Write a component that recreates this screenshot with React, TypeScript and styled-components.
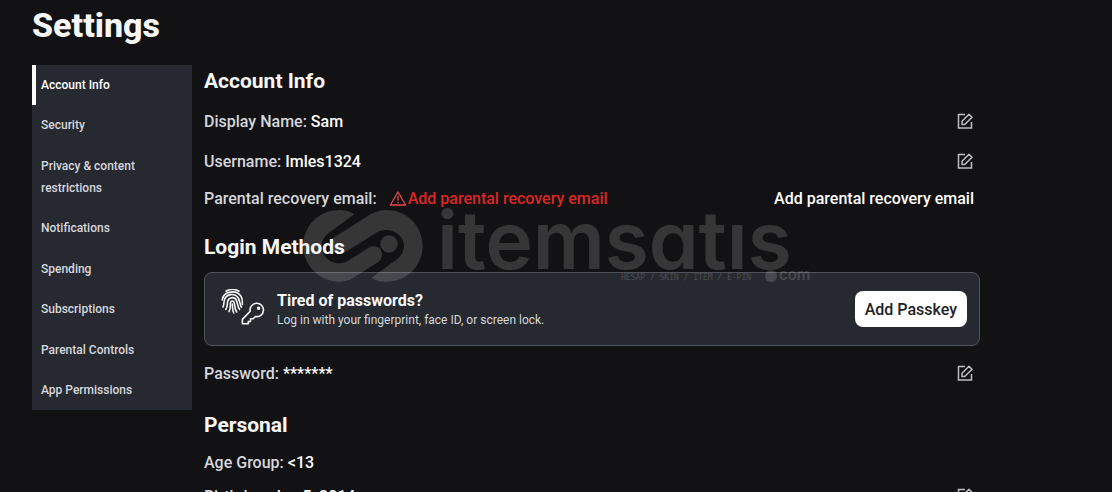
import React from 'react';
import styled, { createGlobalStyle } from 'styled-components';

const GlobalStyle = createGlobalStyle`
  * { box-sizing: border-box; }
  body {
    margin: 0;
    background: #121214;
    color: #f7f7f8;
    font-family: Roboto, 'Liberation Sans', sans-serif;
    font-size: 16px;
    font-weight: 500;
  }
`;

const Page = styled.div`
  position: relative;
  height: 100vh;
  overflow: hidden;
  padding: 0 32px;
`;

const Title = styled.h1`
  margin: 0;
  padding: 5px 0 20px;
  font-size: 34px;
  line-height: 40px;
  font-weight: 800;
`;

const Layout = styled.div`
  display: flex;
  align-items: flex-start;
  gap: 12px;
  max-width: 948px;
`;

const Sidebar = styled.nav`
  flex: 0 0 160px;
  background: #272930;
`;

const TabList = styled.ul`
  display: flex;
  flex-direction: column;
  justify-content: space-between;
  min-height: 345px;
  list-style: none;
  margin: 0;
  padding: 0;
`;

const TabLink = styled.a<{ $active?: boolean }>`
  display: block;
  padding: 9px 36px 9px 5px;
  border-left: 4px solid ${(p) => (p.$active ? '#ffffff' : 'transparent')};
  color: ${(p) => (p.$active ? '#ffffff' : '#d5d7dd')};
  font-size: 12px;
  line-height: 22px;
  text-decoration: none;
`;

const Main = styled.main`
  flex: 1;
  min-width: 0;
`;

const Heading = styled.h2`
  margin: 0;
  padding-bottom: 4px;
  font-size: 21px;
  line-height: 32px;
  font-weight: 700;
`;

const Section = styled.section`
  padding-bottom: 16px;
`;

const Row = styled.div<{ $compact?: boolean }>`
  display: flex;
  align-items: center;
  justify-content: space-between;
  height: ${(p) => (p.$compact ? 34 : 40)}px;
  padding-right: 6px;
`;

const Label = styled.span`
  color: #d5d7dd;
`;

const Value = styled.span`
  color: #ffffff;
`;

const Field = styled.div`
  display: flex;
  align-items: center;
  gap: 4px;
`;

const Warning = styled.span`
  display: flex;
  align-items: center;
  gap: 1px;
  margin-left: 8px;
  color: #dc2626;
`;

const PlainButton = styled.button`
  display: flex;
  padding: 0;
  border: 0;
  background: none;
  color: #ffffff;
  font: inherit;
  cursor: pointer;
`;

const Card = styled.div`
  display: flex;
  align-items: center;
  height: 74px;
  margin: 5px 0 7px;
  padding: 0 12px 0 16px;
  border: 1px solid #505259;
  border-radius: 8px;
  background: #272930;
`;

const CardText = styled.div`
  flex: 1;
  padding: 2px 0 0 12px;
`;

const CardTitle = styled.div`
  line-height: 20px;
  font-weight: 700;
`;

const CardNote = styled.div`
  color: #d5d7dd;
  font-size: 12px;
  line-height: 18px;
  font-weight: 400;
`;

const PasskeyButton = styled.button`
  height: 36px;
  padding: 0 10px;
  border: 0;
  border-radius: 8px;
  background: #ffffff;
  color: #202227;
  font: inherit;
  cursor: pointer;
`;

const Watermark = styled.div`
  position: absolute;
  left: 303px;
  top: 205px;
  width: 512px;
  height: 84px;
  opacity: 0.15;
  pointer-events: none;
`;

const Wordmark = styled.text`
  font-family: Inter, sans-serif;
  font-weight: 600;
  font-feature-settings: 'cv11';
`;

const Tagline = styled.text`
  font-family: 'DejaVu Sans Mono', monospace;
  font-size: 8px;
`;

const EditIcon = () => (
  <svg width="18" height="18" viewBox="0 0 18 18" fill="none" stroke="#bcbec2" strokeWidth="1.5">
    <path d="M9 2.500H2.500v13.500h13V10" />
    <path d="M6 12.500V9.300L13 2.200l3 3-7.300 7.300z" strokeLinejoin="round" />
  </svg>
);

const WarningIcon = () => (
  <svg width="18" height="18" viewBox="0 0 18 18" fill="none" stroke="#e5484d" strokeWidth="1.3">
    <path d="M9 3 L16.6 16 H1.4 Z" strokeLinejoin="round" />
    <path d="M9 7v4.600M9 12.800v1.500" />
  </svg>
);

const PasskeyIcon = () => (
  <svg width="44" height="40" viewBox="0 1 44 40" fill="none" stroke="#f7f7f8" strokeWidth="1.600" strokeLinecap="round">
    <path d="M5 3.200C9 .8 14 .8 18 3.200" />
    <path d="M1.200 12C2.400 2.800 15.500 1.400 20 8.200c1.400 2.300 1.600 5 1.400 8.200" />
    <path d="M2 19c1-2.200.8-4 1.200-6.200C4.500 5.600 13.800 4.400 17.200 10c1.800 3.200 1.500 6 3.200 9.200" />
    <path d="M4.800 21.500c2-3 1.300-5.200 1.800-8 1-4.600 7-5.200 8.800-1.200 1.600 3.500.8 6.200 3.200 9.200" />
    <path d="M8 23.600c2-3.200 1-6 1.500-9 .5-2 3-2 3.600-.2 1.100 3.400.2 6.400 2.600 9.600" />
    <path d="M11.300 16c.4 3-.2 5.500 1.400 9" />
    <g strokeLinejoin="round" transform="translate(0 -1)">
      <path d="M29.200 24.300a6.700 6.700 0 1 1 5.200 5.200l-2.200 2.200h-2.700v2.800h-2.200v2.200H21.400v-4.300z" />
      <circle cx="37.600" cy="21.200" r="1" />
    </g>
  </svg>
);

const WatermarkLogo = () => (
  <svg width="512" height="84" viewBox="0 0 512 84" fill="#ffffff">
    <g transform="translate(-3 0) scale(0.3333)">
      <path d="M163 28C145 17 130 15 118 15C58 15 10 62 10 122C10 182 58 230 118 230C140 230 152 224 162 217L236 170C254 155 248 125 222 124C212 124 207 128 200 132L140 170C110 185 65 165 65 125C65 108 72 96 85 85Z" />
      <path d="M215 218C233 229 248 230 260 230C320 230 368 183 368 123C368 63 320 15 260 15C240 15 226 20 212 28L98 100C80 112 88 140 112 146C125 148 135 142 145 136L228 84C258 62 312 82 312 122C312 140 304 152 293 161Z" />
      <circle cx="267" cy="117" r="26" />
    </g>
    <Wordmark x="134" y="64" fontSize="80">itemsatıs</Wordmark>
    <Tagline x="318" y="75">HESAP / SKIN / ITEM / E-PIN</Tagline>
    <circle cx="468" cy="71" r="6" />
    <Wordmark x="476" y="75" fontSize="15">com</Wordmark>
  </svg>
);

const tabs = [
  'Account Info',
  'Security',
  'Privacy & content restrictions',
  'Notifications',
  'Spending',
  'Subscriptions',
  'Parental Controls',
  'App Permissions',
];

type InfoRowProps = { label: string; value: string; editable?: boolean; compact?: boolean };

const InfoRow = ({ label, value, editable, compact }: InfoRowProps) => (
  <Row $compact={compact}>
    <Field>
      <Label>{label}</Label>
      <Value>{value}</Value>
    </Field>
    {editable && (
      <PlainButton aria-label={`Edit ${label}`}>
        <EditIcon />
      </PlainButton>
    )}
  </Row>
);

export default function App() {
  return (
    <>
      <GlobalStyle />
      <Page>
        <Title>Settings</Title>
        <Layout>
          <Sidebar aria-label="Settings">
            <TabList>
              {tabs.map((tab, i) => (
                <li key={tab}>
                  <TabLink href="#" $active={i === 0}>{tab}</TabLink>
                </li>
              ))}
            </TabList>
          </Sidebar>
          <Main>
            <Section>
              <Heading>Account Info</Heading>
              <InfoRow label="Display Name:" value="Sam" editable />
              <InfoRow label="Username:" value="Imles1324" editable />
              <Row $compact>
                <Field>
                  <Label>Parental recovery email:</Label>
                  <Warning>
                    <WarningIcon />
                    Add parental recovery email
                  </Warning>
                </Field>
                <PlainButton>Add parental recovery email</PlainButton>
              </Row>
            </Section>
            <Section>
              <Heading>Login Methods</Heading>
              <Card>
                <PasskeyIcon />
                <CardText>
                  <CardTitle>Tired of passwords?</CardTitle>
                  <CardNote>Log in with your fingerprint, face ID, or screen lock.</CardNote>
                </CardText>
                <PasskeyButton>Add Passkey</PasskeyButton>
              </Card>
              <InfoRow label="Password:" value="*******" editable />
            </Section>
            <Section>
              <Heading>Personal</Heading>
              <InfoRow label="Age Group:" value="<13" compact />
              <InfoRow label="Birthday:" value="Jan 5, 2014" editable compact />
            </Section>
          </Main>
        </Layout>
        <Watermark aria-hidden="true">
          <WatermarkLogo />
        </Watermark>
      </Page>
    </>
  );
}
